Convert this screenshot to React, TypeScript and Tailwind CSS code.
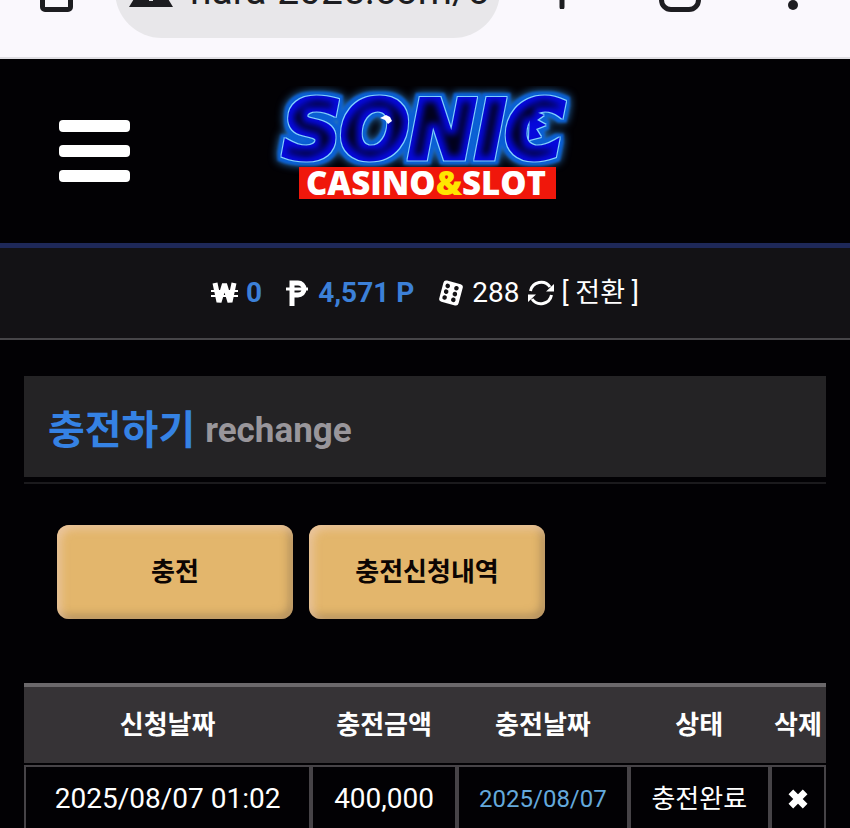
import React from "react";

const sans = "font-['Roboto','Noto_Sans_CJK_KR',sans-serif]";

function BrowserBar() {
  return (
    <div className="flex h-[59px] items-end overflow-hidden border-b-2 border-[#dfdee3] bg-[#faf8fd] pb-[19px] text-[#1d1d21]">
      <div className="flex h-[94px] w-full shrink-0 items-center pl-10">
        <button type="button" aria-label="Home" className="h-[42px] w-[33px] shrink-0 rounded-[5px] border-[5px] border-current" />
        <label className="ml-[42px] flex h-[94px] min-w-0 flex-1 items-center gap-[17px] rounded-full bg-[#e8e7ea] pl-[14px] pr-2">
          <svg className="w-11 shrink-0" viewBox="0 0 44 40" height="40" aria-hidden="true">
            <path d="M22 0 44 36H0Z" fill="currentColor" />
            <path d="M20 14h4v9h-4zM20 26h4v4h-4z" fill="#e8e7ea" />
          </svg>
          <input
            aria-label="Address"
            readOnly
            value="nara-2025.com/c"
            className="h-12 w-full min-w-0 bg-transparent text-[39px] leading-[48px] outline-none"
          />
        </label>
        <div className="flex w-[350px] shrink-0 items-center">
          <button type="button" aria-label="New tab" className="ml-11 w-9">
            <svg viewBox="0 0 36 36" width="36" height="36" aria-hidden="true">
              <path d="M18 2v32M2 18h32" stroke="currentColor" strokeWidth="5" strokeLinecap="round" />
            </svg>
          </button>
          <button type="button" aria-label="Tabs" className="ml-[79px] h-[42px] w-[42px] rounded-xl border-[5px] border-current" />
          <button type="button" aria-label="Menu" className="ml-[86px] w-3">
            <svg viewBox="0 0 12 38" width="12" height="38" aria-hidden="true">
              <g fill="currentColor">
                <circle cx="6" cy="5" r="5" />
                <circle cx="6" cy="19" r="5" />
                <circle cx="6" cy="33" r="5" />
              </g>
            </svg>
          </button>
        </div>
      </div>
    </div>
  );
}

function Logo() {
  return (
    <svg viewBox="0 0 330 130" width="330" height="130" role="img" aria-label="Sonic Casino & Slot">
      <defs>
        <filter id="neon" x="-15%" y="-30%" width="130%" height="160%" colorInterpolationFilters="sRGB">
          <feMorphology in="SourceAlpha" operator="dilate" radius="1" result="edge" />
          <feMorphology in="SourceAlpha" operator="dilate" radius="4" result="wide" />
          <feGaussianBlur in="wide" stdDeviation="4" result="soft" />
          <feGaussianBlur in="wide" stdDeviation="1" result="body" />
          <feFlood floodColor="#2b7fd0" />
          <feComposite in2="soft" operator="in" result="halo" />
          <feFlood floodColor="#0a5fd4" />
          <feComposite in2="body" operator="in" result="rim" />
          <feFlood floodColor="#84d2ff" />
          <feComposite in2="edge" operator="in" result="line" />
          <feMorphology in="SourceAlpha" operator="erode" radius="5" result="thin" />
          <feGaussianBlur in="thin" stdDeviation="3" result="core" />
          <feFlood floodColor="#01011c" />
          <feComposite in2="core" operator="in" result="dark" />
          <feMerge>
            <feMergeNode in="halo" />
            <feMergeNode in="rim" />
            <feMergeNode in="line" />
            <feMergeNode in="SourceGraphic" />
            <feMergeNode in="dark" />
          </feMerge>
        </filter>
      </defs>
      <g filter="url(#neon)" fill="#0609dc">
        <text
          x="23"
          y="72"
          fontFamily="'DejaVu Sans', sans-serif"
          fontWeight="700"
          fontStyle="italic"
          fontSize="80"
          stroke="#0609dc"
          strokeWidth="5"
        >
          SONIC
        </text>
        <path d="M270 24l14 5-7 5 9 5-10 4 5 8-12 3z" />
      </g>
      <path d="M120 32l6-3 4 2 2 4-4 3-3-4z" fill="#fff" />
      <rect x="39" y="81" width="257" height="32" fill="#f0170b" />
      <text x="166" y="109" textAnchor="middle" fontFamily="'Open Sans', sans-serif" fontWeight="800" fontSize="33" fill="#fff">
        CASINO<tspan fill="#ffe600">&amp;</tspan>SLOT
      </text>
    </svg>
  );
}

function Header() {
  return (
    <header className="grid h-[189px] grid-cols-[1fr_auto_1fr] items-center border-b-[5px] border-[#1e2858] px-[59px]">
      <button type="button" aria-label="메뉴" className="flex w-[71px] flex-col gap-[13px]">
        <span className="h-3 rounded-sm bg-white" />
        <span className="h-3 rounded-sm bg-white" />
        <span className="h-3 rounded-sm bg-white" />
      </button>
      <Logo />
    </header>
  );
}

function WonIcon() {
  return (
    <svg viewBox="0 0 27 22" width="27" height="22" aria-hidden="true" fill="none" stroke="#fff">
      <path d="M4 1l4 19 5.500-18 5.500 18 4-19" strokeWidth="5" strokeLinejoin="bevel" />
      <path d="M0 9h27M0 14h27" strokeWidth="2" />
    </svg>
  );
}

function PesoIcon() {
  return (
    <svg viewBox="0 0 22 26" width="22" height="26" aria-hidden="true" fill="none" stroke="#fff">
      <path d="M6 26V3h6a6 6 0 0 1 0 12H6" strokeWidth="5" />
      <path d="M0 9h22" strokeWidth="3" />
    </svg>
  );
}

function DiceIcon() {
  return (
    <svg viewBox="0 0 26 26" width="26" height="26" aria-hidden="true">
      <g transform="rotate(15 13 13)">
        <rect x="3" y="2" width="20" height="22" rx="3" fill="#fff" />
        <g fill="#131215">
          <circle cx="8" cy="7" r="2.3" />
          <circle cx="8" cy="13" r="2.3" />
          <circle cx="8" cy="19" r="2.3" />
          <circle cx="17" cy="7" r="2.3" />
          <circle cx="17" cy="13" r="2.3" />
          <circle cx="17" cy="19" r="2.3" />
        </g>
      </g>
    </svg>
  );
}

function RefreshIcon() {
  return (
    <svg viewBox="0 0 26 26" width="26" height="26" aria-hidden="true">
      <g fill="none" stroke="#fff" strokeWidth="3">
        <path d="M2.500 11A10.800 10.800 0 0 1 22 7" />
        <path d="M23.500 15A10.800 10.800 0 0 1 4 19" />
      </g>
      <path d="M26 4v7.500H18zM0 22v-7.500H8z" fill="#fff" />
    </svg>
  );
}

function StatusBar() {
  return (
    <div className="flex h-[92px] items-center justify-center border-b-2 border-[#464548] bg-[#131215] text-[28px] leading-8 text-white">
      <WonIcon />
      <span className="ml-2 font-bold text-[#3c80d8]">0</span>
      <span className="ml-6"><PesoIcon /></span>
      <span className="ml-[10px] font-bold text-[#3c80d8]">4,571 P</span>
      <span className="ml-6"><DiceIcon /></span>
      <span className="ml-2">288</span>
      <button type="button" className="ml-2 flex items-center gap-2">
        <RefreshIcon />
        <span className="text-[27px]">[ 전환 ]</span>
      </button>
    </div>
  );
}

function GoldButton({ children }: { children: React.ReactNode }) {
  return (
    <button
      type="button"
      className="h-[94px] w-[236px] rounded-xl bg-[#e3b66c] text-[26px] font-bold text-[#0c0503] shadow-[inset_4px_4px_8px_rgba(240,205,180,0.7),inset_-4px_-4px_8px_rgba(130,105,75,0.5)]"
    >
      {children}
    </button>
  );
}

const cell = "h-[68px] border-2 border-[#464347] p-0";

function HistoryTable() {
  return (
    <table className="mt-16 w-full table-fixed border-separate border-spacing-0 text-center text-white">
      <colgroup>
        <col className="w-[35.8%]" />
        <col className="w-[18.2%]" />
        <col className="w-[21.4%]" />
        <col className="w-[17.6%]" />
        <col className="w-[7%]" />
      </colgroup>
      <thead className="bg-[#363336] text-[26px] leading-8">
        <tr>
          {["신청날짜", "충전금액", "충전날짜", "상태", "삭제"].map((name) => (
            <th key={name} scope="col" className="h-20 whitespace-nowrap border-t-4 border-[#6b686b] p-0 font-bold">
              {name}
            </th>
          ))}
        </tr>
      </thead>
      <tbody className="text-[28px] leading-8">
        <tr aria-hidden="true"><td colSpan={5} className="h-[2px] p-0" /></tr>
        <tr>
          <td className={cell}>2025/08/07 01:02</td>
          <td className={cell}>400,000</td>
          <td className={`${cell} text-2xl text-[#64a9dc]`}>2025/08/07</td>
          <td className={`${cell} text-[26px]`}>충전완료</td>
          <td className={cell}>
            <button type="button" aria-label="삭제" className="block w-full">
              <svg className="mx-auto" viewBox="0 0 20 20" width="22" height="22" aria-hidden="true">
                <path d="M3.500 3.500l13 13M16.500 3.500l-13 13" stroke="#fff" strokeWidth="6" />
              </svg>
            </button>
          </td>
        </tr>
      </tbody>
    </table>
  );
}

export default function App() {
  return (
    <div className={`min-h-screen bg-[#020104] ${sans}`}>
      <BrowserBar />
      <Header />
      <StatusBar />
      <main className="px-6 pt-9">
        <h1 className="flex h-[101px] items-center gap-[10px] bg-[#242325] px-6 pt-[9px] font-bold">
          <span className="text-[40px] leading-[48px] text-[#3582e4]">충전하기</span>
          <span className="text-[35px] leading-[48px] text-[#99969b]">rechange</span>
        </h1>
        <hr className="mt-[5px] border-t-2 border-[#1b1a1d]" />
        <div className="mt-[41px] flex gap-4 px-[33px]">
          <GoldButton>충전</GoldButton>
          <GoldButton>충전신청내역</GoldButton>
        </div>
        <HistoryTable />
      </main>
    </div>
  );
}
